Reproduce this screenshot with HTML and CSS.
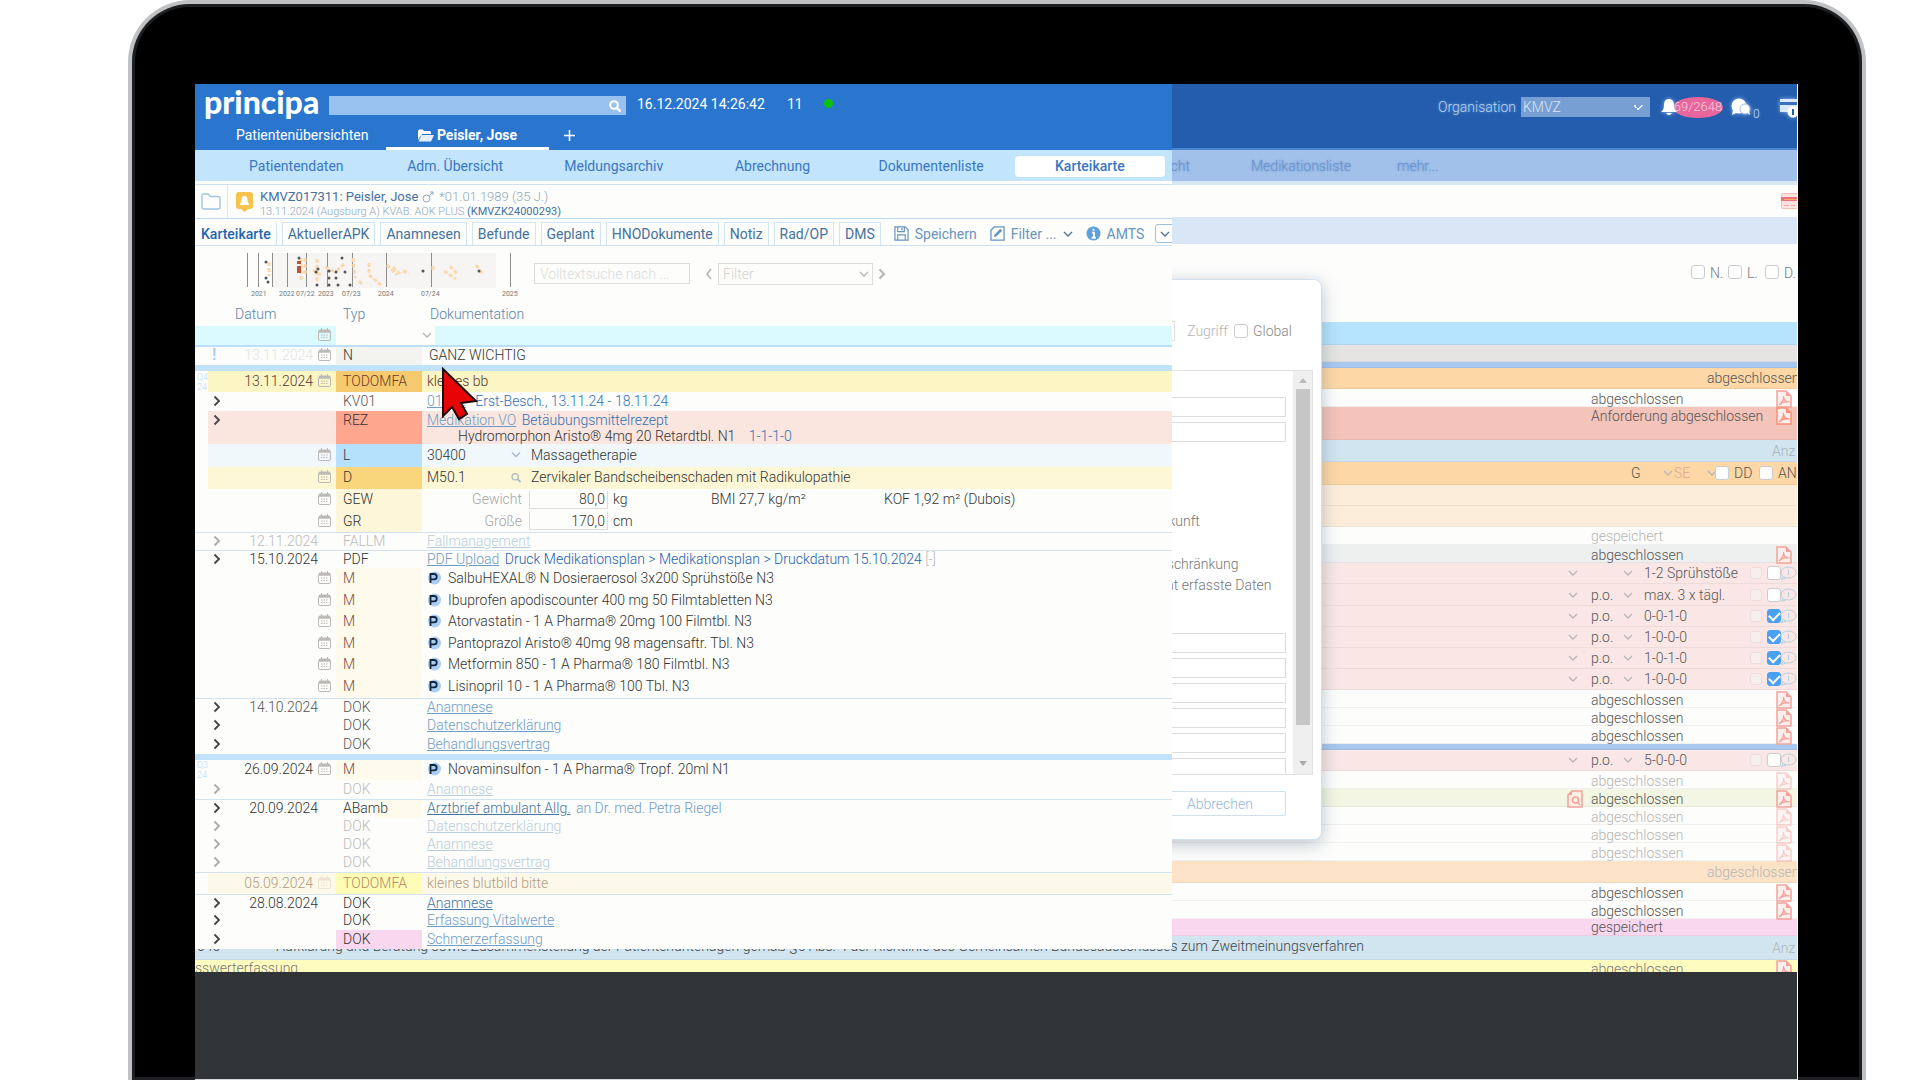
FILE: index.html
```html
<!DOCTYPE html>
<html lang="de">
<head>
<meta charset="utf-8">
<meta name="viewport" content="width=device-width, initial-scale=1">
<title>principa – Karteikarte</title>
<link rel="stylesheet" href="styles.css">
</head>
<body>
<svg class="sprite" aria-hidden="true">
  <symbol id="cal" viewBox="0 0 13 13"><path d="M.5 4.500V3Q.5 1.500 2 1.500h9q1.500 0 1.500 1.500v1.500z" fill="currentColor"/><path d="M.5 4h12v7q0 1.500-1.500 1.500H2Q.5 12.500.5 11zM3.500 0v2M9.500 0v2" fill="none" stroke="currentColor"/><path d="M3 7h7M3 9.500h7" stroke="currentColor" stroke-dasharray="1.500 1"/></symbol>
  <symbol id="down" viewBox="0 0 10 10"><path d="M1 3l4 4 4-4" fill="none" stroke="currentColor" stroke-width="1.300"/></symbol>
  <symbol id="next" viewBox="0 0 8 12"><path d="M1.500 1.500L6 6l-4.500 4.500" fill="none" stroke="currentColor" stroke-width="1.800"/></symbol>
  <symbol id="prev" viewBox="0 0 8 12"><path d="M6 1L2 6l4 5" fill="none" stroke="currentColor" stroke-width="1.500"/></symbol>
  <symbol id="lens" viewBox="0 0 12 12"><circle cx="5" cy="5" r="3.800" fill="none" stroke="currentColor" stroke-width="1.500"/><path d="M8 8l3.500 3.500" stroke="currentColor" stroke-width="2"/></symbol>
  <symbol id="pdf" viewBox="0 0 16 18"><path d="M1 1h9l5 5v11H1z" fill="#fdeeee" stroke="currentColor" stroke-width="1.500"/><path d="M10 1v5h5z" fill="currentColor"/><path d="M3 15c4-3 5-6 4.500-9 0 4 2 6 6 6-4-1-7 0-10.500 3z" fill="none" stroke="currentColor" stroke-width="1.200"/></symbol>
  <symbol id="find" viewBox="0 0 16 18"><path d="M5 1h10v16H1V5z" fill="#fdeee4" stroke="currentColor" stroke-width="1.500"/><path d="M1 5h4V1z" fill="currentColor"/><circle cx="8.500" cy="10" r="3" fill="none" stroke="currentColor" stroke-width="1.500"/><path d="M10.500 12l2.500 3" stroke="currentColor" stroke-width="1.500"/></symbol>
  <symbol id="bubble" viewBox="0 0 17 14"><ellipse cx="8.500" cy="6.500" rx="7.500" ry="5.500" fill="none" stroke="currentColor"/><path d="M3 10.500L1.500 13.500 6 12M8.500 4v5" fill="none" stroke="currentColor"/></symbol>
  <symbol id="plan" viewBox="0 0 14 14"><circle cx="7.500" cy="7" r="6.500" fill="#a9cdf3"/><path d="M3.500 12V3H7a2.700 2.700 0 0 1 0 5.400H3.500" fill="none" stroke="#15263f" stroke-width="1.800"/></symbol>
</svg>

<div class="device">
<main class="screen">

  <section class="base" aria-label="Hintergrund">
    <header class="base-head">
      <label for="org">Organisation</label>
      <select id="org" class="org"><option>KMVZ</option></select>
      <svg class="bell" viewBox="0 0 16 18"><path d="M8 1c4 0 5 3 5 7 0 3 1 4 3 6H0c2-2 3-3 3-6 0-4 1-7 5-7zM5 15h6q-3 4-6 0z" fill="#fff"/></svg>
      <span class="pill">69/2648</span>
      <svg class="chat" viewBox="0 0 20 18"><circle cx="8" cy="8" r="7.500" fill="#fff"/><path d="M2 12l-1 5 6-3z" fill="#fff"/><circle cx="14" cy="11" r="5" fill="#fff" stroke="#9fc0e8"/><path d="M15 14l4 3-1-5z" fill="#fff"/></svg>
      <span class="zero">0</span>
      <svg class="card" viewBox="0 0 18 20"><path d="M1 1h17v13H1z" fill="#dbe8f7"/><path d="M1 4h17v3H1z" fill="#3a70bb"/><circle cx="14" cy="14" r="5.500" fill="#fff"/><path d="M14 11v6" stroke="#245dae" stroke-width="2"/></svg>
    </header>
    <nav class="base-nav"><a href="#">Übersicht</a><a href="#">Medikationsliste</a><a href="#">mehr...</a></nav>
    <div class="base-patient"><svg viewBox="0 0 16 16"><rect x=".5" y=".5" width="18" height="15" rx="1" fill="#fbe3e2" stroke="#f4bdb9"/><path d="M0 4h16v4H0z" fill="#ee6f7c"/><path d="M3 6.500h13" stroke="#f9b06a"/><path d="M3 12.500h5M10 12.500h4" stroke="#f0a5a3"/></svg></div>
    <div class="base-tools"></div>
    <div class="base-filter">
      <label><input type="checkbox"> N.</label><label><input type="checkbox"> L.</label><label><input type="checkbox"> D.</label>
    </div>
    <table class="base-rows">
      <colgroup><col><col class="c-status"></colgroup>
      <tbody>
      <tr class="h23 sky"><td></td><td></td></tr>
      <tr class="h17 grey"><td></td><td></td></tr>
      <tr class="h6 blue"><td></td><td></td></tr>
      <tr class="h21 orange"><td></td><td class="end">abgeschlossen</td></tr>
      <tr class="h18"><td></td><td><div class="st"><span></span>abgeschlossen<svg class="pdf"><use href="#pdf"/></svg></div></td></tr>
      <tr class="h33 red top"><td></td><td><div class="st"><span></span>Anforderung abgeschlossen<svg class="pdf hot"><use href="#pdf"/></svg></div></td></tr>
      <tr class="h22 ice dim"><td></td><td class="anz">Anz</td></tr>
      <tr class="h23 orange"><td></td><td><div class="diag"><span>G</span><svg class="dn"><use href="#down"/></svg><span class="se">SE</span><svg class="dn"><use href="#down"/></svg><label><input type="checkbox">DD</label><label><input type="checkbox">AN</label></div></td></tr>
      <tr class="h21 cream"><td></td><td></td></tr>
      <tr class="h21 cream"><td></td><td></td></tr>
      <tr class="h18 dim"><td></td><td><div class="st"><span></span>gespeichert</div></td></tr>
      <tr class="h18 mist"><td></td><td><div class="st"><span></span>abgeschlossen<svg class="pdf"><use href="#pdf"/></svg></div></td></tr>
      <tr class="h21 pink"><td></td><td><div class="med"><svg class="dn"><use href="#down"/></svg><span></span><svg class="dn"><use href="#down"/></svg><span>1-2 Sprühstöße</span><input type="checkbox" class="off" disabled aria-label="Pause"><input type="checkbox" aria-label="Dauer"><svg class="bub"><use href="#bubble"/></svg></div></td></tr>
      <tr class="h22 pink"><td></td><td><div class="med"><svg class="dn"><use href="#down"/></svg><span>p.o.</span><svg class="dn"><use href="#down"/></svg><span>max. 3 x tägl.</span><input type="checkbox" class="off" disabled aria-label="Pause"><input type="checkbox" aria-label="Dauer"><svg class="bub"><use href="#bubble"/></svg></div></td></tr>
      <tr class="h21 pink"><td></td><td><div class="med"><svg class="dn"><use href="#down"/></svg><span>p.o.</span><svg class="dn"><use href="#down"/></svg><span>0-0-1-0</span><input type="checkbox" class="off" disabled aria-label="Pause"><input type="checkbox" checked aria-label="Dauer"><svg class="bub"><use href="#bubble"/></svg></div></td></tr>
      <tr class="h21 pink"><td></td><td><div class="med"><svg class="dn"><use href="#down"/></svg><span>p.o.</span><svg class="dn"><use href="#down"/></svg><span>1-0-0-0</span><input type="checkbox" class="off" disabled aria-label="Pause"><input type="checkbox" checked aria-label="Dauer"><svg class="bub"><use href="#bubble"/></svg></div></td></tr>
      <tr class="h21 pink"><td></td><td><div class="med"><svg class="dn"><use href="#down"/></svg><span>p.o.</span><svg class="dn"><use href="#down"/></svg><span>1-0-1-0</span><input type="checkbox" class="off" disabled aria-label="Pause"><input type="checkbox" checked aria-label="Dauer"><svg class="bub"><use href="#bubble"/></svg></div></td></tr>
      <tr class="h21 pink"><td></td><td><div class="med"><svg class="dn"><use href="#down"/></svg><span>p.o.</span><svg class="dn"><use href="#down"/></svg><span>1-0-0-0</span><input type="checkbox" class="off" disabled aria-label="Pause"><input type="checkbox" checked aria-label="Dauer"><svg class="bub"><use href="#bubble"/></svg></div></td></tr>
      <tr class="h18"><td></td><td><div class="st"><span></span>abgeschlossen<svg class="pdf"><use href="#pdf"/></svg></div></td></tr>
      <tr class="h18"><td></td><td><div class="st"><span></span>abgeschlossen<svg class="pdf"><use href="#pdf"/></svg></div></td></tr>
      <tr class="h18"><td></td><td><div class="st"><span></span>abgeschlossen<svg class="pdf"><use href="#pdf"/></svg></div></td></tr>
      <tr class="h6 blue"><td></td><td></td></tr>
      <tr class="h21 pink"><td></td><td><div class="med"><svg class="dn"><use href="#down"/></svg><span>p.o.</span><svg class="dn"><use href="#down"/></svg><span>5-0-0-0</span><input type="checkbox" class="off" disabled aria-label="Pause"><input type="checkbox" aria-label="Dauer"><svg class="bub"><use href="#bubble"/></svg></div></td></tr>
      <tr class="h18 dim"><td></td><td><div class="st"><span></span>abgeschlossen<svg class="pdf"><use href="#pdf"/></svg></div></td></tr>
      <tr class="h18 lime"><td></td><td><div class="st"><svg class="pdf"><use href="#find"/></svg>abgeschlossen<svg class="pdf"><use href="#pdf"/></svg></div></td></tr>
      <tr class="h18 dim"><td></td><td><div class="st"><span></span>abgeschlossen<svg class="pdf"><use href="#pdf"/></svg></div></td></tr>
      <tr class="h18 dim"><td></td><td><div class="st"><span></span>abgeschlossen<svg class="pdf"><use href="#pdf"/></svg></div></td></tr>
      <tr class="h18 dim"><td></td><td><div class="st"><span></span>abgeschlossen<svg class="pdf"><use href="#pdf"/></svg></div></td></tr>
      <tr class="h22 peach dim"><td></td><td class="end">abgeschlossen</td></tr>
      <tr class="h18"><td></td><td><div class="st"><span></span>abgeschlossen<svg class="pdf"><use href="#pdf"/></svg></div></td></tr>
      <tr class="h18"><td></td><td><div class="st"><span></span>abgeschlossen<svg class="pdf"><use href="#pdf"/></svg></div></td></tr>
      <tr class="h17 rose"><td></td><td><div class="st"><span></span>gespeichert</div></td></tr>
      <tr class="h24 ice"><td><div class="service"><span>040</span><span>Aufklärung und Beratung sowie Zusammenstellung der Patientenunterlagen gemäß §6 Abs. 4 der Richtlinie des Gemeinsamen Bundesausschusses zum Zweitmeinungsverfahren</span></div></td><td class="anz dim">Anz</td></tr>
      </tbody>
    </table>
    <div class="cut"><span>sswerterfassung</span><div class="st"><span></span>abgeschlossen<svg class="pdf"><use href="#pdf"/></svg></div></div>
  </section>

  <section class="dialog" role="dialog" aria-label="Auswahl">
    <div class="dlg-top"><input type="text" class="field" aria-label="Name"><span>Zugriff</span><label><input type="checkbox">Global</label></div>
    <div class="dlg-frame">
      <div class="dlg-form">
        <input type="text" class="field" aria-label="Feld 1"><input type="text" class="field" aria-label="Feld 2">
        <p class="t1">Auskunft</p><p class="t2">Einschränkung</p><p class="t3">nicht erfasste Daten</p>
        <input type="text" class="field" aria-label="Feld 3"><input type="text" class="field" aria-label="Feld 4"><input type="text" class="field" aria-label="Feld 5"><input type="text" class="field" aria-label="Feld 6"><input type="text" class="field" aria-label="Feld 7"><input type="text" class="field" aria-label="Feld 8">
      </div>
      <div class="bar"><i class="up"></i><i class="thumb"></i><i class="dnarrow"></i></div>
    </div>
    <button class="cancel">Abbrechen</button>
  </section>

  <section class="panel" aria-label="Karteikarte">
    <header class="head">
      <div class="head-row">
        <span class="logo">principa</span>
        <div class="search"><input type="search" aria-label="Suche"><button aria-label="Suchen"><svg viewBox="0 0 12 12"><circle cx="5" cy="5" r="3.800" fill="none" stroke="#fff" stroke-width="2"/><path d="M7.500 7.500l4 4" stroke="#fff" stroke-width="2.500"/></svg></button></div>
        <span class="clock">16.12.2024 14:26:42</span><span class="count">11</span><i class="dot"></i>
      </div>
      <nav class="tabs">
        <a href="#" class="tab">Patientenübersichten</a>
        <a href="#" class="tab on"><svg viewBox="0 0 16 13"><path d="M0 11V2q0-1.500 1.500-1.500h3L6 2h5.500Q13 2 13 3.500V5H4z" fill="#fff"/><path d="M3.500 6H16l-3 6.500H.5z" fill="#e3effb"/></svg>Peisler, Jose</a>
        <button class="plus" aria-label="Neuer Tab"><svg viewBox="0 0 11 11"><path d="M5.500 0v11M0 5.500h11" stroke="#fff" stroke-width="1.600"/></svg></button>
      </nav>
    </header>
    <nav class="sub"><a href="#">Patientendaten</a><a href="#">Adm. Übersicht</a><a href="#">Meldungsarchiv</a><a href="#">Abrechnung</a><a href="#">Dokumentenliste</a><a href="#" class="on">Karteikarte</a></nav>
    <div class="patient">
      <div class="folder"><svg viewBox="0 0 20 17"><path d="M1 14V3q0-2 2-2h4l2.500 2.500H17q2 0 2 2V14q0 2-2 2H3q-2 0-2-2z" fill="none" stroke="#a3c3e2" stroke-width="1.400"/></svg></div>
      <svg class="alert" viewBox="0 0 17 20"><path d="M3 0h11q3 0 3 3v11q0 3-3 3h-2l-3.500 3L5 17H3q-3 0-3-3V3q0-3 3-3z" fill="#f6c44c"/><path d="M8.500 4c2.500 0 3 2 3 4.500 0 2 1.500 2.500 1.500 4.500H4c0-2 1.500-2.500 1.500-4.500C5.500 6 6 4 8.500 4z" fill="#fff"/></svg>
      <div class="who"><div class="l1"><b>KMVZ017311: Peisler, Jose</b><svg viewBox="0 0 12 12"><circle cx="4.500" cy="7.500" r="3.500" fill="none" stroke="currentColor"/><path d="M7 5l4-4M8 1h3v3" fill="none" stroke="currentColor"/></svg><span>*01.01.1989 (35 J.)</span></div><div class="l2">13.11.2024 (Augsburg A) KVAB: AOK PLUS <b>(KMVZK24000293)</b></div></div>
    </div>
    <nav class="tools">
      <a href="#" class="on">Karteikarte</a><a href="#">AktuellerAPK</a><a href="#">Anamnesen</a><a href="#">Befunde</a><a href="#">Geplant</a><a href="#">HNODokumente</a><a href="#">Notiz</a><a href="#">Rad/OP</a><a href="#">DMS</a>
      <button><svg class="ic" viewBox="0 0 16 16"><path d="M1 1h11l3 3v11H1zM4 1v5h7V1M4 15V9.500h8V15" fill="none" stroke="currentColor" stroke-width="1.300"/><path d="M8.500 2.500v2" stroke="currentColor" stroke-width="1.500"/></svg>Speichern</button>
      <button><svg class="ic" viewBox="0 0 16 16"><path d="M4.500 1H15v14H1V4.500z" fill="none" stroke="currentColor" stroke-width="1.400"/><path d="M4 12l1-3 6-6 2 2-6 6z" fill="currentColor"/></svg>Filter ...<svg class="dn"><use href="#down"/></svg></button>
      <button class="amts"><svg class="ic" viewBox="0 0 16 16"><circle cx="8" cy="8" r="7.500" fill="#5f9fdc"/><path d="M8 3v2M6.500 7H8.500v5M6 12.500h4.500" stroke="#fff" stroke-width="2" fill="none"/></svg>AMTS</button>
      <button class="more" aria-label="Mehr"><svg class="dn"><use href="#down"/></svg></button>
    </nav>
    <div class="finder">
      <svg class="timeline" viewBox="0 0 292 44">
        <path d="M32 0h223v35H32z" fill="#f6f5f3"/>
        <path d="M6.500 0v34M17.500 0v34M31.500 0v34M46.500 0v34M65.500 0v34M86.500 0v34M111.500 0v34M145.500 0v34M190.500 0v34M269.500 0v34" stroke="#8d8d8d"/>
        <g fill="none" stroke="#fbd9ae" stroke-width="3" stroke-dasharray="4 2"><path d="M28 9v14M60 5v24M64 5v18M72 17l8 5M76 6v22M84 14l10 5M96 18l8-8M112 5l2 20M118 28l4 4M128 10v12l12 10M146 12l10 10M152 14l8 8M162 18l6 2M192 13v4M203 18l12 8M209 13l7 8M235 12l6 8"/></g>
        <g fill="#555"><circle cx="25" cy="9" r="1.500"/><circle cx="25" cy="25" r="1.500"/><circle cx="27" cy="29" r="1.500"/><circle cx="58" cy="5" r="1.500"/><circle cx="77" cy="16" r="1.500"/><circle cx="75" cy="19" r="1.500"/><circle cx="76" cy="32" r="1.500"/><circle cx="88" cy="18" r="1.500"/><circle cx="88" cy="25" r="1.500"/><circle cx="88" cy="32" r="1.500"/><circle cx="95" cy="19" r="1.500"/><circle cx="95" cy="25" r="1.500"/><circle cx="97" cy="32" r="1.500"/><circle cx="101" cy="5" r="1.500"/><circle cx="104" cy="19" r="1.500"/><circle cx="109" cy="32" r="1.500"/><circle cx="182" cy="18" r="1.500"/><circle cx="238" cy="18" r="1.500"/></g>
        <path d="M56 8h4v3h-4zM56 13h4v7h-4z" fill="#b5563c"/>
        <g class="years"><text x="10" y="43">2021</text><text x="38" y="43">2022</text><text x="55" y="43">07/22</text><text x="77" y="43">2023</text><text x="101" y="43">07/23</text><text x="137" y="43">2024</text><text x="180" y="43">07/24</text><text x="261" y="43">2025</text></g>
      </svg>
      <input type="text" class="full" placeholder="Volltextsuche nach ..." aria-label="Volltextsuche">
      <svg class="nav-i"><use href="#prev"/></svg>
      <div class="sel"><select aria-label="Filter"><option>Filter</option></select><svg class="dn"><use href="#down"/></svg></div>
      <svg class="nav-i"><use href="#next"/></svg>
    </div>
    <table class="rows">
      <colgroup><col class="c-gut"><col class="c-arr"><col class="c-date"><col class="c-type"><col></colgroup>
      <thead><tr><th></th><th></th><th>Datum</th><th>Typ</th><th>Dokumentation</th></tr></thead>
      <tbody>
      <tr class="h21 entry"><td></td><td></td><td class="d"><svg class="cal"><use href="#cal"/></svg></td><td class="clear"></td><td><div class="pick"><svg class="dn"><use href="#down"/></svg></div></td></tr>
      <tr class="h18 note"><td></td><td class="mark">!</td><td class="d"><span class="ghost">13.11.2024</span><svg class="cal"><use href="#cal"/></svg></td><td class="t-grey">N</td><td>GANZ WICHTIG</td></tr>
      <tr class="h6 band"><td colspan="5"></td></tr>
      <tr class="h21 yellow"><td class="q">Q4<br>24</td><td></td><td class="d"><span>13.11.2024</span><svg class="cal"><use href="#cal"/></svg></td><td class="t-gold">TODOMFA</td><td>kleines bb</td></tr>
      <tr class="h19 soft"><td></td><td><svg class="ar"><use href="#next"/></svg></td><td></td><td>KV01</td><td><a href="#">01102</a> <span class="info kv">Erst-Besch., 13.11.24 - 18.11.24</span></td></tr>
      <tr class="h33 salmon top"><td></td><td><svg class="ar"><use href="#next"/></svg></td><td></td><td class="t-red">REZ</td><td><a href="#">Medikation VO</a> <span class="info">Betäubungsmittelrezept</span><div class="drug">Hydromorphon Aristo® 4mg 20 Retardtbl. N1 <span class="info">1-1-1-0</span></div></td></tr>
      <tr class="h23 icy"><td></td><td></td><td class="d"><svg class="cal"><use href="#cal"/></svg></td><td class="t-sky">L</td><td><div class="code"><span>30400</span><svg class="dn"><use href="#down"/></svg>Massagetherapie</div></td></tr>
      <tr class="h22 lemon"><td></td><td></td><td class="d"><svg class="cal"><use href="#cal"/></svg></td><td class="t-gold2">D</td><td><div class="code"><span>M50.1</span><svg class="ls"><use href="#lens"/></svg>Zervikaler Bandscheibenschaden mit Radikulopathie</div></td></tr>
      <tr class="h22"><td></td><td></td><td class="d"><svg class="cal"><use href="#cal"/></svg></td><td class="t-cream">GEW</td><td><div class="meas"><label for="gew">Gewicht</label><input id="gew" value="80,0"><span class="unit">kg</span><span class="bmi">BMI 27,7 kg/m²</span><span>KOF 1,92 m² (Dubois)</span></div></td></tr>
      <tr class="h21"><td></td><td></td><td class="d"><svg class="cal"><use href="#cal"/></svg></td><td class="t-cream">GR</td><td><div class="meas"><label for="gr">Größe</label><input id="gr" value="170,0"><span class="unit">cm</span></div></td></tr>
      <tr class="h18 faint line"><td></td><td><svg class="ar"><use href="#next"/></svg></td><td class="d2">12.11.2024</td><td>FALLM</td><td><a href="#">Fallmanagement</a></td></tr>
      <tr class="h18 line"><td></td><td><svg class="ar"><use href="#next"/></svg></td><td class="d2">15.10.2024</td><td>PDF</td><td><a href="#">PDF Upload</a> <span class="info dark">Druck Medikationsplan &gt; Medikationsplan &gt; Druckdatum 15.10.2024</span> <span class="faint">[-]</span></td></tr>
      <tr class="h22"><td></td><td></td><td class="d"><svg class="cal"><use href="#cal"/></svg></td><td class="t-m">M</td><td><div class="rx"><svg><use href="#plan"/></svg>SalbuHEXAL® N Dosieraerosol 3x200 Sprühstöße N3</div></td></tr>
      <tr class="h21"><td></td><td></td><td class="d"><svg class="cal"><use href="#cal"/></svg></td><td class="t-m">M</td><td><div class="rx"><svg><use href="#plan"/></svg>Ibuprofen apodiscounter 400 mg 50 Filmtabletten N3</div></td></tr>
      <tr class="h22"><td></td><td></td><td class="d"><svg class="cal"><use href="#cal"/></svg></td><td class="t-m">M</td><td><div class="rx"><svg><use href="#plan"/></svg>Atorvastatin - 1 A Pharma® 20mg 100 Filmtbl. N3</div></td></tr>
      <tr class="h21"><td></td><td></td><td class="d"><svg class="cal"><use href="#cal"/></svg></td><td class="t-m">M</td><td><div class="rx"><svg><use href="#plan"/></svg>Pantoprazol Aristo® 40mg 98 magensaftr. Tbl. N3</div></td></tr>
      <tr class="h22"><td></td><td></td><td class="d"><svg class="cal"><use href="#cal"/></svg></td><td class="t-m">M</td><td><div class="rx"><svg><use href="#plan"/></svg>Metformin 850 - 1 A Pharma® 180 Filmtbl. N3</div></td></tr>
      <tr class="h22"><td></td><td></td><td class="d"><svg class="cal"><use href="#cal"/></svg></td><td class="t-m">M</td><td><div class="rx"><svg><use href="#plan"/></svg>Lisinopril 10 - 1 A Pharma® 100 Tbl. N3</div></td></tr>
      <tr class="h18 line soft"><td></td><td><svg class="ar"><use href="#next"/></svg></td><td class="d2">14.10.2024</td><td>DOK</td><td><a href="#">Anamnese</a></td></tr>
      <tr class="h19 soft"><td></td><td><svg class="ar"><use href="#next"/></svg></td><td></td><td>DOK</td><td><a href="#">Datenschutzerklärung</a></td></tr>
      <tr class="h19 soft"><td></td><td><svg class="ar"><use href="#next"/></svg></td><td></td><td>DOK</td><td><a href="#">Behandlungsvertrag</a></td></tr>
      <tr class="h6 band"><td colspan="5"></td></tr>
      <tr class="h20"><td class="q">Q3<br>24</td><td></td><td class="d"><span>26.09.2024</span><svg class="cal"><use href="#cal"/></svg></td><td class="t-m">M</td><td><div class="rx"><svg><use href="#plan"/></svg>Novaminsulfon - 1 A Pharma® Tropf. 20ml N1</div></td></tr>
      <tr class="h19 faint"><td></td><td><svg class="ar"><use href="#next"/></svg></td><td></td><td>DOK</td><td><a href="#">Anamnese</a></td></tr>
      <tr class="h19 line"><td></td><td><svg class="ar"><use href="#next"/></svg></td><td class="d2">20.09.2024</td><td class="t-a">ABamb</td><td><a href="#" class="strong">Arztbrief ambulant Allg.</a> <span class="info light">an Dr. med. Petra Riegel</span></td></tr>
      <tr class="h18 faint"><td></td><td><svg class="ar"><use href="#next"/></svg></td><td></td><td>DOK</td><td><a href="#">Datenschutzerklärung</a></td></tr>
      <tr class="h18 faint"><td></td><td><svg class="ar"><use href="#next"/></svg></td><td></td><td>DOK</td><td><a href="#">Anamnese</a></td></tr>
      <tr class="h18 faint"><td></td><td><svg class="ar"><use href="#next"/></svg></td><td></td><td>DOK</td><td><a href="#">Behandlungsvertrag</a></td></tr>
      <tr class="h22 line pale"><td></td><td></td><td class="d"><span>05.09.2024</span><svg class="cal"><use href="#cal"/></svg></td><td class="t-yel">TODOMFA</td><td>kleines blutbild bitte</td></tr>
      <tr class="h18 line"><td></td><td><svg class="ar"><use href="#next"/></svg></td><td class="d2">28.08.2024</td><td>DOK</td><td><a href="#" class="strong">Anamnese</a></td></tr>
      <tr class="h18"><td></td><td><svg class="ar"><use href="#next"/></svg></td><td></td><td>DOK</td><td><a href="#">Erfassung Vitalwerte</a></td></tr>
      <tr class="h19"><td></td><td><svg class="ar"><use href="#next"/></svg></td><td></td><td class="t-rose">DOK</td><td><a href="#">Schmerzerfassung</a></td></tr>
      </tbody>
    </table>
    <svg class="pointer" viewBox="-2 -2 38 54"><path d="M0 0v47l9-9 7 12 8-5-6-11 15-2z" fill="#e80404" stroke="#1c0a0a" stroke-width="2"/></svg>
  </section>
</main>
</div>
</body>
</html>
```
FILE: styles.css
```css
* { box-sizing: border-box; }
body { margin: 0; background: #fff; font: 300 14px/16px Roboto, "Liberation Sans", sans-serif; color: #333; }
a { color: inherit; text-decoration: none; }
button { font: inherit; color: inherit; border: 0; background: none; padding: 0; }
input, select { font: inherit; color: inherit; margin: 0; }
svg { display: block; flex: none; }
.sprite { position: absolute; width: 0; height: 0; }

.device { height: 100vh; margin: 0 54px 0 128px; padding: 80px 64px 0 63px; background: #000; border: 4px solid #bfc1c3; border-bottom: 0; border-radius: 62px 62px 0 0; box-shadow: inset 0 0 0 3px #1d1f22; overflow: hidden; }
.screen { position: relative; height: 100%; background: #313437; border-right: 1px solid #fff; border-bottom: 1px solid #d8d8d8; overflow: hidden; }

/* background record view */
.base { background: #fdfdfc; color: #555; }
.base-head { height: 66px; background: #245dae; border-bottom: 2px solid #4a86cf; display: flex; justify-content: flex-end; align-items: flex-start; padding-top: 13px; color: #bcd3ef; line-height: 20px; text-shadow: 0 0 3px #6ea0dd; }
.org { appearance: none; width: 129px; height: 20px; margin: 0 11px 0 5px; padding: 0 2px; border: 0; border-radius: 0; background: linear-gradient(45deg, transparent 40%, #e4eefa 40% 60%, transparent 60%) 113px 8px/5px 5px no-repeat, linear-gradient(-45deg, transparent 40%, #e4eefa 40% 60%, transparent 60%) 117px 8px/5px 5px no-repeat, #779fd3; color: #d9e6f6; line-height: 20px; }
.bell { width: 16px; height: 20px; filter: drop-shadow(0 0 2px #8fb9ea); }
.pill { width: 50px; height: 21px; margin: 0 8px 0 -4px; border-radius: 50%; background: #e8669b; color: #f9cfe0; font-size: 13px; text-align: center; text-shadow: none; }
.chat { width: 20px; height: 20px; filter: drop-shadow(0 0 2px #8fb9ea); }
.zero { font-size: 12px; padding-top: 7px; width: 28px; padding-left: 2px; }
.card { width: 18px; height: 22px; filter: drop-shadow(0 0 2px #8fb9ea); }
.base-nav { height: 35px; background: #a2c1ea; border-bottom: 4px solid #d6e6f5; display: grid; grid-template-columns: 120px 146px 400px; justify-content: end; align-items: center; color: #6892cc; text-shadow: 0 0 3px #6892cc; }
.base-nav a { padding-top: 1px; }
.base-nav a:first-child { text-align: right; padding-right: 61px; }
.base-patient { height: 32px; display: flex; justify-content: flex-end; padding-top: 8px; }
.base-patient svg { width: 16px; height: 16px; }
.base-tools { height: 27px; background: #d9e6f5; }
.base-filter { height: 78px; display: flex; justify-content: flex-end; gap: 5px; padding: 21px 0 0; color: #777; }
.base-filter label { display: flex; gap: 5px; width: 32px; height: 16px; white-space: nowrap; }
input[type=checkbox] { appearance: none; flex: none; width: 14px; height: 14px; border: 1px solid #ccc; border-radius: 3px; background: #fff; display: grid; place-items: center; }
input[type=checkbox]:checked { background: #4aa0f2; border-color: #4aa0f2; }
input[type=checkbox]:checked::before { content: ""; width: 9px; height: 5px; border: solid #fff; border-width: 0 0 2px 2px; transform: rotate(-45deg) translate(1px, -1px); }
input[type=checkbox].off { width: 12px; height: 12px; background: #f8eeec; border-color: #eddcda; }

table { border-collapse: separate; border-spacing: 0; table-layout: fixed; width: 100%; }
td, th { padding: 0; white-space: nowrap; }
.h6 td { height: 6px; } .h17 td { height: 17px; } .h18 td { height: 18px; } .h19 td { height: 19px; } .h20 td { height: 20px; }
.h21 td { height: 21px; } .h22 td { height: 22px; } .h23 td { height: 23px; } .h24 td { height: 24px; } .h33 td { height: 33px; }
.base-rows td { box-shadow: inset 0 -1px #0000000d; padding-bottom: 1px; }
.c-status { width: 230px; }
.sky { background: #b6e3fd; } .grey { background: #e5e4e2; } .blue { background: #a8c8f0; } .orange { background: #fdd7a6; } .red { background: #f4c3ba; }
.ice { background: #d0e5f0; } .cream { background: #fcedda; } .mist { background: #eef0f0; } .pink { background: #fae7e5; } .lime { background: #f3f6e2; }
.peach { background: #fce3c7; } .rose { background: #f8d7ef; }
.end { padding-left: 140px; } .anz { padding-left: 205px; color: #a9b3ba; }
.dim { color: #b5b5b5; } .dim .pdf { opacity: .5; }
.st { display: grid; grid-template-columns: 24px 1fr 21px; align-items: center; height: 16px; }
.top td { vertical-align: top; }
.pdf { width: 16px; height: 18px; color: #f1a29b; }
.hot { color: #ff8f75; }
.dn { width: 10px; height: 10px; color: #b9b5b5; }
.diag { display: grid; grid-template-columns: 32px 11px 33px 8px 44px 38px; padding-left: 64px; align-items: center; height: 16px; }
.diag label { display: flex; gap: 5px; align-items: center; }
.se { color: #dca98f; }
.med { display: grid; grid-template-columns: 23px 32px 21px 106px 17px 13px 18px; align-items: center; padding-left: 1px; height: 16px; width: 230px; }
.bub { width: 17px; height: 14px; color: #b3cfdf; }
.service { display: flex; gap: 56px; padding-left: 2px; color: #444; width: 1200px; height: 20px; }
.cut { height: 12px; overflow: hidden; background: #fffcc0; display: flex; justify-content: space-between; color: #777; }
.cut > .st { width: 230px; }

/* dialog behind the panel */
.dialog { position: absolute; top: 195px; right: 475px; width: 400px; height: 561px; background: #fff; border: 1px solid #cfe0f0; border-radius: 8px; box-shadow: 0 4px 18px #5b6f8266; color: #777; }
.dlg-top { display: flex; justify-content: flex-end; align-items: center; height: 90px; padding: 11px 29px 0 0; gap: 6px; color: #b5b5b5; }
.dlg-top label { display: flex; align-items: center; gap: 5px; color: #888; }
.dlg-top .field { width: 120px; margin-right: 6px; }
.field { display: block; height: 20px; width: 100%; border: 1px solid #ddd; background: #fff; padding: 0 4px; }
.dlg-frame { display: flex; height: 405px; margin-right: 8px; border: 1px solid #e2e2e2; border-left: 0; overflow: hidden; }
.dlg-form { flex: 1; padding-top: 26px; display: flex; flex-direction: column; gap: 5px; }
.dlg-form .field { flex: none; }
.dlg-form p { flex: none; margin: 0; white-space: nowrap; padding-left: 225px; }
.dlg-form .t1 { padding: 66px 0 0 222px; height: 82px; }
.dlg-form .t2 { padding-top: 22px; height: 38px; }
.dlg-form .t3 { height: 51px; }
.bar { width: 19px; background: #efefef; display: flex; flex-direction: column; align-items: center; padding: 7px 2px; gap: 6px; margin-left: 7px; }
.up, .dnarrow { border: 4px solid transparent; border-bottom: 5px solid #bbb; border-top: 0; }
.dnarrow { border-bottom: 0; border-top: 5px solid #aaa; margin-top: 30px; }
.thumb { width: 14px; height: 336px; background: #c6c6c6; }
.cancel { display: block; width: 180px; height: 25px; margin: 16px 35px 0 auto; border: 1px solid #cfe0f0; border-radius: 2px; color: #8fb8dc; text-align: left; padding-left: 80px; }

/* foreground panel */
.panel { position: absolute; top: 0; left: 0; width: 61%; background: #fdfdfb; overflow: hidden; }
.head { height: 66px; background: #2a76cf; color: #fff; font-weight: 400; display: flex; flex-direction: column; justify-content: space-between; }
.head-row { display: flex; align-items: center; height: 36px; padding: 3px 0 0 9px; }
.logo { width: 125px; font: 900 32px/32px Lato, sans-serif; padding-bottom: 4px; }
.search { display: flex; align-items: center; width: 297px; height: 19px; background: #98c1f0; padding-right: 5px; margin-top: 4px; }
.search input { flex: 1; min-width: 0; height: 19px; border: 0; background: none; outline: 0; appearance: none; }
.search svg { width: 12px; height: 12px; }
.clock { width: 161px; padding-left: 11px; } .count { width: 37px; }
.dot { width: 9px; height: 9px; border-radius: 50%; background: #0ac20a; }
.tabs { display: flex; height: 30px; padding-left: 41px; }
.tab { display: flex; align-items: center; height: 30px; width: 150px; }
.tab.on { width: 163px; gap: 3px; justify-content: center; font-weight: 700; border-bottom: 3px solid #fff; padding-top: 3px; }
.tab.on svg { width: 16px; height: 13px; }
.plus { padding-left: 15px; } .plus svg { width: 11px; height: 11px; }
.sub { height: 31px; padding: 1px 3px 0 22px; background: #c2e5fc; color: #3a76c4; font-weight: 400; display: grid; grid-template-columns: repeat(6, 1fr); align-items: center; text-align: center; }
.sub .on { background: #fff; border-radius: 4px; margin: 0 4px; line-height: 21px; font-weight: 500; }
.patient { display: flex; height: 35px; margin-top: 3px; border-top: 1px solid #cfe2f2; border-bottom: 1px solid #bcd9ef; }
.folder { width: 33px; border-right: 1px solid #dbe9f5; padding: 8px 0 0 6px; } .folder svg { width: 20px; height: 17px; }
.alert { width: 17px; height: 20px; margin: 7px 7px 0 8px; }
.who { color: #8fa9c0; } .who b { font-weight: 400; color: #44719f; }
.l1 { display: flex; align-items: center; font-size: 13px; height: 21px; padding-top: 2px; } .l1 svg { width: 12px; height: 12px; margin: 0 5px 0 4px; }
.l2 { font-size: 11px; line-height: 12px; }
.tools { display: flex; align-items: flex-end; height: 27px; border-bottom: 1px solid #d0e2f0; color: #44719f; gap: 5px; }
.tools a { height: 23px; line-height: 22px; padding: 0 5px; border: 1px solid #d4e5f2; border-bottom: 0; font-weight: 400; }
.tools a.on { font-weight: 500; color: #2465b0; border-color: transparent #d4e5f2 transparent transparent; }
.tools button { display: flex; align-items: center; gap: 6px; height: 23px; margin-left: 8px; color: #6a95bd; font-weight: 400; white-space: nowrap; }
.ic { width: 15px; height: 15px; } .tools .dn { color: #4d7396; }
.tools .more { border: 1px solid #9fc0dc; border-radius: 3px; width: 22px; height: 19px; margin: 0 0 2px 6px; padding-left: 4px; flex: none; }
.finder { display: flex; height: 56px; padding: 7px 0 0 46px; }
.timeline { width: 292px; height: 44px; }
.years { font-size: 7px; fill: #777; font-weight: 400; }
.full { width: 156px; height: 21px; border: 1px solid #ddd; background: none; margin: 10px 15px 0 1px; padding: 0 5px; }
.full::placeholder { color: #dcdcdc; opacity: 1; }
.nav-i { width: 8px; height: 12px; margin-top: 15px; color: #b5b0ac; }
.sel { position: relative; width: 155px; height: 22px; margin: 10px 5px 0; }
.sel select { appearance: none; width: 155px; height: 22px; border: 1px solid #ddd; border-radius: 0; background: none; padding: 0 4px; color: #d2d2d2; }
.sel .dn { position: absolute; right: 4px; top: 6px; }

.c-gut { width: 13px; } .c-arr { width: 27px; } .c-date { width: 101px; } .c-type { width: 86px; }
.rows { line-height: 14px; }
th { height: 24px; text-align: left; font-weight: 300; color: #5b82a8; }
th:nth-child(4) { padding-left: 7px; } th:nth-child(5) { padding-left: 8px; }
.rows td { padding-bottom: 2px; }
.rows td:nth-child(4) { padding-left: 7px; }
.rows td:nth-child(5) { padding-left: 5px; }
.rows .note td:nth-child(5) { padding-left: 7px; }
.d, .d2 { text-align: right; padding-right: 18px; }
td.d { padding-right: 5px; }
.d > * { display: inline-block; vertical-align: top; }
.d .cal { margin-left: 5px; }
.cal { width: 13px; height: 13px; color: #bdb9b7; }
.ar { width: 8px; height: 12px; margin-left: 5px; color: #444; }
.entry td { background: #dafafd; border-bottom: 2px solid #bedffa; }
.entry td.clear { background: #fdfdfb; } .rows .entry td:last-child { padding-bottom: 0; } .pick { width: 13px; margin-left: -5px; height: 19px; padding-top: 4px; background: #fdfdfb; }
.rows .mark { color: #a6d3f6; font-weight: 700; font-size: 16px; padding-left: 4px; }
.ghost { color: #e2e4e6; }
.rows .band td { background: #c2e2fb; padding: 0; }
.rows .q { font-size: 9px; line-height: 10px; color: #b9dcf6; padding: 0 0 0 2px; }
.yellow td:not(.q) { background: #fcf6c5; color: #5a3530; }
.rows .t-grey { background: #f3f3f0; } .rows .yellow .t-gold { background: #f5c96d; color: #6b3a28; }
.t-cream { background: #fdf6d8; }
.t-m { background: #fefaec; color: #7b4a45; } .t-a { background: linear-gradient(90deg, transparent 45%, #fefaec 45%); } .t-rose { background: #f8d7ef; }
.salmon td:not(:first-child) { background: #fae6df; } .icy td:not(:first-child) { background: #f0f8fc; } .lemon td:not(:first-child) { background: #fdf7d6; }
.rows .salmon .t-red { background: #fea78e; } .rows .icy .t-sky { background: #b5e1fd; } .rows .lemon .t-gold2 { background: #f9d67b; }
.pale td:not(:first-child) { background: #fcf9ea; color: #b49a80; } .rows .pale .t-yel { background: #fffcb8; color: #b98a5c; } .pale .cal { color: #efe3cf; }
.rows .salmon td { line-height: 16px; padding-top: 1px; padding-bottom: 0; }
.salmon .ar { margin-top: 2px; }
.rows a { color: #6f9cc4; text-decoration: underline; } .rows a.strong { color: #47759f; }
.info { color: #2f70b4; margin-left: 2px; } .info.kv { margin-left: 6px; } .info.dark { color: #1c60b0; } .info.light { color: #6f9cc4; }
.soft { color: #555; }
.faint { color: #bbb; } .rows .faint a { color: #b9cddd; } .faint .ar { color: #aaa; }
.line td { border-top: 1px solid #d3e3f0; }
.drug { padding-left: 31px; color: #333; } .drug .info { margin-left: 10px; }
.code { display: flex; align-items: center; } .code span { width: 84px; } .code .dn, .code .ls { width: 10px; height: 11px; margin-right: 10px; color: #a8b9c6; }
.meas { display: flex; align-items: center; }
.meas label { width: 95px; text-align: right; margin-right: 7px; color: #a5a5a5; }
.meas input { width: 79px; height: 19px; border: 1px solid #ddd; border-top-color: transparent; background: none; text-align: right; padding: 0 2px; margin-right: 5px; }
.unit { width: 98px; } .bmi { width: 173px; }
.rx { display: flex; align-items: center; gap: 7px; } .rx svg { width: 14px; height: 14px; }
.pointer { position: absolute; left: 246px; top: 283px; width: 38px; height: 54px; }
```
